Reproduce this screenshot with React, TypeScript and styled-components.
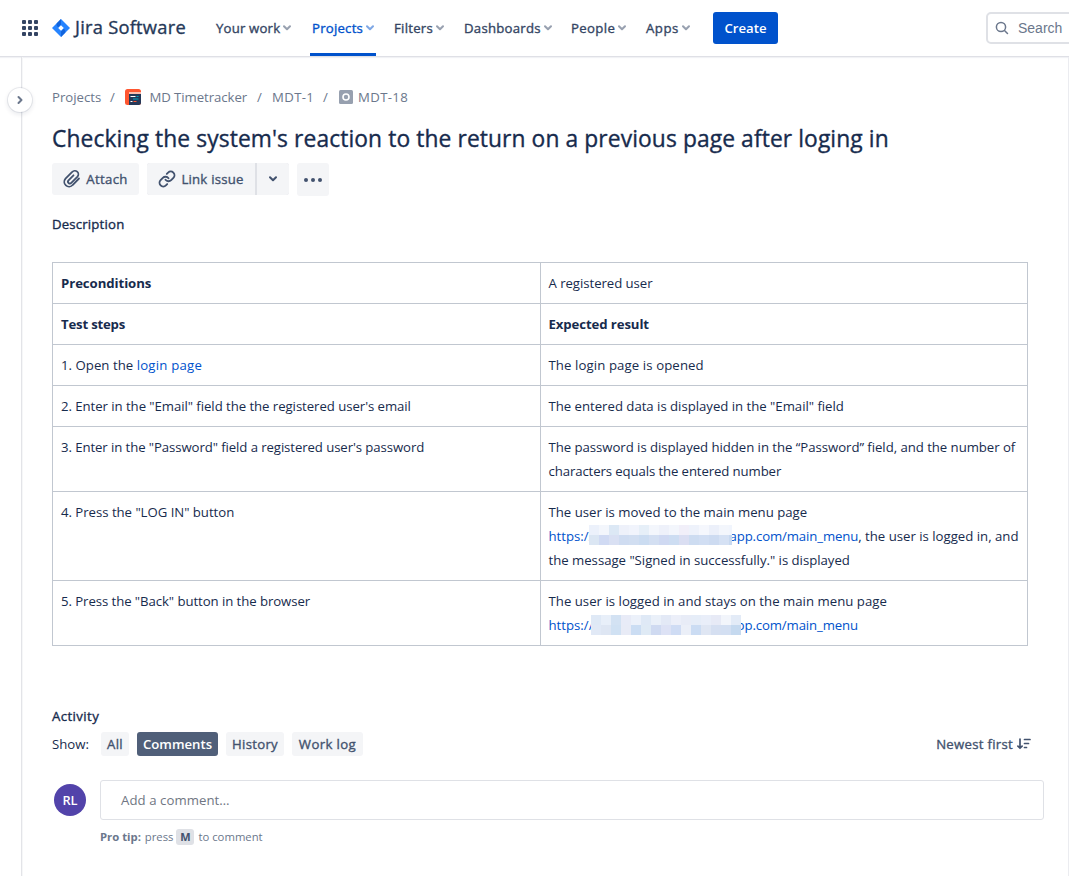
import React from "react";
import styled, { createGlobalStyle } from "styled-components";

const GlobalStyle = createGlobalStyle`
  *, *::before, *::after { box-sizing: border-box; }
  html, body { margin: 0; background: #fff; overflow: hidden; }
  body { font-family: "Open Sans", sans-serif; font-size: 13.2px; color: #172b4d; }
  button, input { font: inherit; border: 0; margin: 0; padding: 0; background: none; color: inherit; }
`;

const Page = styled.div`
  width: 1069px;
  height: 876px;
  display: flex;
  flex-direction: column;
  overflow: hidden;
`;

const Text = styled.span<{ $ls?: number; $medium?: boolean }>`
  white-space: pre;
  letter-spacing: ${(p) => p.$ls ?? 0}px;
  -webkit-text-stroke: ${(p) => (p.$medium ? "0.35px currentColor" : "0")};
`;

const Header = styled.header`
  height: 57px;
  flex: none;
  display: flex;
  align-items: flex-start;
  border-bottom: 1px solid #dfe0e6;
  box-shadow: 0 1px 1px #f1f2f5;
`;

const Switcher = styled.div`
  width: 52px;
  height: 56px;
  padding-left: 22px;
  display: flex;
  align-items: center;
`;

const Brand = styled.div`
  width: 164px;
  height: 56px;
  display: flex;
  align-items: center;
  gap: 5px;
  color: #253858;
  font-size: 18.3px;
  line-height: 24px;
  svg { flex: none; }
  span { padding-bottom: 2px; }
`;

const Nav = styled.nav`
  display: flex;
  height: 56px;
`;

const NavItem = styled.button<{ $width: number; $active?: boolean }>`
  width: ${(p) => p.$width}px;
  height: 56px;
  display: flex;
  align-items: center;
  color: ${(p) => (p.$active ? "#0052cc" : "#344563")};
`;

const NavInner = styled.span<{ $active?: boolean }>`
  height: 56px;
  display: flex;
  align-items: center;
  gap: 3px;
  margin: 0 -2px;
  padding: 3px 2px 0;
  border-bottom: 3px solid ${(p) => (p.$active ? "#0052cc" : "transparent")};
  svg { opacity: 0.5; }
`;

const CreateButton = styled.button`
  width: 65px;
  height: 32px;
  margin-top: 12px;
  border-radius: 3px;
  background: #0052cc;
  color: #fff;
  font-weight: 600;
`;

const SearchBox = styled.div`
  width: 123px;
  height: 32px;
  margin: 12px -40px 0 auto;
  flex: none;
  display: flex;
  align-items: center;
  gap: 9px;
  padding-left: 7px;
  border: 2px solid #dfe1e6;
  border-radius: 5px;
  color: #6b778c;
  font: 14px "Liberation Sans", sans-serif;
`;

const Body = styled.div`
  flex: 1;
  display: flex;
  min-height: 0;
`;

const Rail = styled.aside`
  width: 22px;
  flex: none;
  border-right: 1px solid #e3e4e8;
  box-shadow: 1px 0 0 #f6f7f8;
`;

const Expand = styled.button`
  position: relative;
  z-index: 1;
  display: flex;
  align-items: center;
  justify-content: center;
  width: 24px;
  height: 24px;
  margin: 31px 0 0 8px;
  border-radius: 50%;
  background: #fff;
  box-shadow: 0 0 0 1px rgba(9, 30, 66, 0.08), 0 2px 4px 1px rgba(9, 30, 66, 0.08);
`;

const Main = styled.main`
  flex: 1;
  padding-left: 30px;
  border-right: 1px solid #ebecf0;
  display: flex;
  flex-direction: column;
  align-items: flex-start;
`;

const Crumbs = styled.div`
  height: 20px;
  margin-top: 30px;
  display: flex;
  align-items: center;
  color: #6b778c;
  svg { flex: none; }
`;

const Crumb = styled.span<{ $width: number }>`
  display: flex;
  align-items: center;
  width: ${(p) => p.$width}px;
  gap: 5px;
`;

const Title = styled.h1`
  margin: 17px 0 0;
  height: 30px;
  line-height: 30px;
  font-size: 22.8px;
  font-weight: 400;
  white-space: nowrap;
`;

const Toolbar = styled.div`
  display: flex;
  align-items: flex-start;
  height: 33px;
  margin-top: 9px;
  gap: 8px;
  color: #42526e;
`;

const ToolButton = styled.button<{ $width: number; $radius?: string; $height?: number }>`
  width: ${(p) => p.$width}px;
  height: ${(p) => p.$height ?? 32}px;
  display: flex;
  align-items: center;
  justify-content: center;
  gap: 5px;
  border-radius: ${(p) => p.$radius ?? "3px"};
  background: #f4f5f7;
`;

const Split = styled.div`
  display: flex;
  gap: 2px;
  background: #dfe1e6;
  border-radius: 3px;
`;

const SectionTitle = styled.h2<{ $top: number }>`
  margin: ${(p) => p.$top}px 0 0;
  height: 20px;
  line-height: 20px;
  font-size: 13.2px;
  font-weight: 400;
`;

const Table = styled.table`
  width: 976px;
  margin-top: 28px;
  border-collapse: collapse;
  table-layout: fixed;
  border: 1px solid #c1c7d0;
`;

const Cell = styled.td<{ $bold?: boolean }>`
  border: 1px solid #c1c7d0;
  padding: 8px 0 8px 8px;
  line-height: 24px;
  vertical-align: top;
  white-space: nowrap;
  font-weight: ${(p) => (p.$bold ? 700 : 400)};
`;

const Line = styled.div`
  height: 24px;
  display: flex;
`;

const Link = styled.a`
  color: #0052cc;
  text-decoration: none;
  display: inline-flex;
`;

const Mosaic = styled.span<{ $width: number; $top: number; $left: number; $right: number }>`
  position: relative;
  z-index: 1;
  flex: none;
  display: inline-grid;
  grid-template-columns: repeat(15, 10px);
  grid-auto-rows: 10px;
  width: ${(p) => p.$width}px;
  height: 20px;
  margin: ${(p) => `${p.$top}px ${p.$right}px 0 ${p.$left}px`};
  overflow: hidden;
`;

const Tile = styled.span<{ $color: string }>`
  background: ${(p) => p.$color};
`;

const ShowRow = styled.div`
  width: 979px;
  height: 24px;
  margin-top: 6px;
  display: flex;
  align-items: center;
  gap: 8px;
`;

const ShowLabel = styled.span`
  width: 41px;
`;

const Tab = styled.button<{ $width: number; $active?: boolean }>`
  width: ${(p) => p.$width}px;
  height: 24px;
  border-radius: 3px;
  background: ${(p) => (p.$active ? "#505f79" : "#f4f5f7")};
  color: ${(p) => (p.$active ? "#fff" : "#42526e")};
  font-weight: ${(p) => (p.$active ? 600 : 400)};
`;

const Sort = styled.div`
  margin-left: auto;
  display: flex;
  align-items: center;
  gap: 4px;
  color: #42526e;
`;

const CommentRow = styled.div`
  display: flex;
  align-items: center;
  gap: 14px;
  margin: 24px 0 0 2px;
`;

const Avatar = styled.div`
  width: 32px;
  height: 32px;
  border-radius: 50%;
  background: #5243aa;
  color: #fff;
  font-size: 12.8px;
  font-weight: 600;
  display: flex;
  align-items: center;
  justify-content: center;
`;

const CommentBox = styled.div`
  width: 944px;
  height: 40px;
  padding-left: 20px;
  display: flex;
  align-items: center;
  border: 1px solid #dfe1e6;
  border-radius: 3px;
  color: #707683;
`;

const Tip = styled.div`
  height: 16px;
  margin: 9px 0 0 48px;
  display: flex;
  align-items: center;
  color: #6b778c;
  font-size: 11.3px;
  line-height: 14px;
  > span, > b { padding-bottom: 1px; }
`;

const Bold = styled.b`
  font-weight: 700;
  margin-right: 1px;
`;

const Key = styled.kbd`
  width: 18px;
  height: 16px;
  margin: 0 4px 0 3px;
  border-radius: 3px;
  background: #dfe1e6;
  color: #42526e;
  font: 700 11px/16px "Open Sans", sans-serif;
  text-align: center;
`;

const Chevron = ({ color = "currentColor" }: { color?: string }) => (
  <svg width="8" height="6" viewBox="0 0 8 6" fill="none" stroke={color} strokeWidth="2" strokeLinecap="round" strokeLinejoin="round">
    <path d="M1 1.2 4 4.3 7 1.2" />
  </svg>
);

const NAV = [
  { label: "Your work", width: 96, ls: 0.18 },
  { label: "Projects", width: 82, ls: 0.22, active: true },
  { label: "Filters", width: 70, ls: 0.25 },
  { label: "Dashboards", width: 107, ls: 0.25 },
  { label: "People", width: 75, ls: 0.35 },
  { label: "Apps", width: 67, ls: 0.5 },
];

const HIDDEN_A = [
  "#ecf1fb", "#f3f6fc", "#dce8f5", "#eef1fa", "#f1f4fc", "#e6eff8", "#f3f6fc", "#eef1fa", "#f3f6fc", "#f1eff9", "#eef2fb", "#f5f7fd", "#ecf0fa", "#f3f6fc", "#f1f5fd",
  "#dbe6f3", "#d0daf3", "#d9e0f3", "#cfdcf1", "#d1def1", "#cbdcf1", "#d3dff2", "#cfd9f2", "#cdddf2", "#dadef2", "#cddcf1", "#d1def3", "#cddbf1", "#d5e1f4", "#c8d9f0",
];

const HIDDEN_B = [
  "#dfe9f6", "#e8eff9", "#d3e2f3", "#e8ebf7", "#ecf1fa", "#dfe9f6", "#eaf0f9", "#e3e9f6", "#eceff9", "#e8ecf7", "#e6edf8", "#e9eef9", "#e7eaf6", "#f2f5fb", "#e3ebf7",
  "#e1e9f6", "#dee6f3", "#d0e1f3", "#e8ebf6", "#cbddf3", "#dfeaf5", "#cfdaf1", "#dde2f5", "#cfdcf4", "#ebeff8", "#cbdcf3", "#dfe6f3", "#d5dff1", "#d3dff2", "#c5d9ef",
];

export default function App() {
  return (
    <Page>
      <GlobalStyle />
      <Header>
        <Switcher>
          <svg width="16" height="16" viewBox="0 0 16 16" fill="#344563">
            {[0, 6, 12].map((y) => [0, 6, 12].map((x) => <rect key={`${x}-${y}`} x={x} y={y} width="4" height="4" rx="1" />))}
          </svg>
        </Switcher>
        <Brand>
          <svg width="18" height="18" viewBox="0 0 18 18">
            <path d="M9 0 18 9 9 18 0 9Z" fill="#2684ff" />
            <path d="M9 0 4.6 4.4Q4.2 7 6.3 8.2L9 5.6Z" fill="#1264dc" />
            <path d="M9 18 13.4 13.6Q13.8 11 11.7 9.8L9 12.4Z" fill="#1264dc" />
            <path d="M9 6.2 11.8 9 9 11.8 6.2 9Z" fill="#fff" />
          </svg>
          <Text $ls={0.25} $medium>Jira Software</Text>
        </Brand>
        <Nav>
          {NAV.map((n) => (
            <NavItem key={n.label} $width={n.width} $active={n.active}>
              <NavInner $active={n.active}>
                <Text $medium $ls={n.ls}>{n.label}</Text>
                <Chevron />
              </NavInner>
            </NavItem>
          ))}
        </Nav>
        <CreateButton><Text>Create</Text></CreateButton>
        <SearchBox>
          <svg width="14" height="14" viewBox="0 0 14 14" fill="none" stroke="#6b778c" strokeWidth="1.5" strokeLinecap="round">
            <circle cx="6" cy="6" r="4.6" />
            <path d="m9.5 9.5 3 3" />
          </svg>
          <span>Search</span>
        </SearchBox>
      </Header>
      <Body>
        <Rail>
          <Expand>
            <svg width="6" height="10" viewBox="0 0 6 10" fill="none" stroke="#6b778c" strokeWidth="2" strokeLinecap="round" strokeLinejoin="round">
              <path d="M1.5 2 4.5 5 1.5 8" />
            </svg>
          </Expand>
        </Rail>
        <Main>
          <Crumbs>
            <Crumb $width={58}><Text>Projects</Text></Crumb>
            <Crumb $width={15}>/</Crumb>
            <Crumb $width={132}>
              <svg width="16" height="16" viewBox="0 0 16 16">
                <rect width="16" height="16" rx="2.5" fill="#ff5630" />
                <path d="M4 4h12v9.500A2.500 2.500 0 0 1 13.500 16H4Z" fill="#253858" />
                <path d="M4 3h12v2H4Z" fill="#ffbdad" />
                <path d="M5.500 7.500h5M5.500 12.500h2" stroke="#fff" />
                <path d="M11.500 7.500h2M8 10h5.500" stroke="#00a3bf" />
                <path d="M8.500 12.500h3" stroke="#ff5630" />
              </svg>
              <Text $ls={-0.05}>{" MD Timetracker"}</Text>
            </Crumb>
            <Crumb $width={15}>/</Crumb>
            <Crumb $width={51}><Text $ls={0.35}>MDT-1</Text></Crumb>
            <Crumb $width={16}>/</Crumb>
            <Crumb $width={80}>
              <svg width="14" height="14" viewBox="0 0 14 14">
                <rect width="14" height="14" rx="1.5" fill="#97a0af" />
                <circle cx="7" cy="7" r="3" fill="none" stroke="#fff" strokeWidth="1.6" />
              </svg>
              <Text $ls={0.35}>MDT-18</Text>
            </Crumb>
          </Crumbs>
          <Title><Text $medium $ls={0.1}>Checking the system's reaction to the return on a previous page after loging in</Text></Title>
          <Toolbar>
            <ToolButton $width={87}>
              <svg width="18" height="20" viewBox="0 0 18 20" fill="none" stroke="currentColor" strokeWidth="1.8" strokeLinecap="round">
                <path d="M16 9.500 9.600 16A4.700 4.700 0 0 1 2.500 9.700L9.200 3A3.500 3.500 0 0 1 14.500 7.600L8.300 13.900A1.900 1.900 0 0 1 5.500 11.300L10.500 6.300" />
              </svg>
              <Text $medium $ls={0.35}>Attach</Text>
            </ToolButton>
            <Split>
              <ToolButton $width={108} $radius="3px 0 0 3px">
                <svg width="18" height="18" viewBox="0 0 24 24" fill="none" stroke="currentColor" strokeWidth="2.5" strokeLinecap="round">
                  <path d="M10 13a5 5 0 0 0 7.540.54l3-3a5 5 0 0 0-7.070-7.070l-1.720 1.710" />
                  <path d="M14 11a5 5 0 0 0-7.540-.54l-3 3a5 5 0 0 0 7.070 7.070l1.710-1.710" />
                </svg>
                <Text $medium $ls={0.22}>Link issue</Text>
              </ToolButton>
              <ToolButton $width={32} $radius="0 3px 3px 0"><Chevron /></ToolButton>
            </Split>
            <ToolButton $width={32} $height={33}>
              <svg width="18" height="4" viewBox="0 0 18 4" fill="currentColor">
                <circle cx="2" cy="2" r="2" /><circle cx="9" cy="2" r="2" /><circle cx="16" cy="2" r="2" />
              </svg>
            </ToolButton>
          </Toolbar>
          <SectionTitle $top={18}><Text $medium $ls={0.18}>Description</Text></SectionTitle>
          <Table>
            <tbody>
              <tr>
                <Cell $bold><Text $ls={-0.07}>Preconditions</Text></Cell>
                <Cell><Text $ls={-0.05}>A registered user</Text></Cell>
              </tr>
              <tr>
                <Cell $bold><Text $ls={-0.2}>Test steps</Text></Cell>
                <Cell $bold><Text $ls={-0.1}>Expected result</Text></Cell>
              </tr>
              <tr>
                <Cell><Text $ls={0.03}>1. Open the </Text><Link><Text $ls={0.22}>login page</Text></Link></Cell>
                <Cell><Text $ls={0.1}>The login page is opened</Text></Cell>
              </tr>
              <tr>
                <Cell><Text $ls={-0.055}>2. Enter in the "Email" field the the registered user's email</Text></Cell>
                <Cell><Text $ls={-0.02}>The entered data is displayed in the "Email" field</Text></Cell>
              </tr>
              <tr>
                <Cell><Text $ls={-0.09}>3. Enter in the "Password" field a registered user's password</Text></Cell>
                <Cell>
                  <Line><Text $ls={-0.045}>The password is displayed hidden in the “Password” field, and the number of</Text></Line>
                  <Line><Text $ls={-0.11}>characters equals the entered number</Text></Line>
                </Cell>
              </tr>
              <tr>
                <Cell><Text $ls={-0.03}>4. Press the "LOG IN" button</Text></Cell>
                <Cell>
                  <Line><Text>The user is moved to the main menu page</Text></Line>
                  <Line>
                    <Link>
                      <Text>https://</Text>
                      <Mosaic $width={143} $top={1} $left={-4} $right={-3}>{HIDDEN_A.map((c, i) => <Tile key={i} $color={c} />)}</Mosaic>
                      <Text $ls={-0.12}>app.com/main_menu</Text>
                    </Link>
                    <Text>, the user is logged in, and</Text>
                  </Line>
                  <Line><Text $ls={-0.02}>the message "Signed in successfully." is displayed</Text></Line>
                </Cell>
              </tr>
              <tr>
                <Cell><Text $ls={-0.07}>5. Press the "Back" button in the browser</Text></Cell>
                <Cell>
                  <Line><Text $ls={0.02}>The user is logged in and stays on the main menu page</Text></Line>
                  <Line>
                    <Link>
                      <Text>https://</Text>
                      <Mosaic $width={150} $top={2} $left={-2} $right={-5}>{HIDDEN_B.map((c, i) => <Tile key={i} $color={c} />)}</Mosaic>
                      <Text $ls={-0.12}>pp.com/main_menu</Text>
                    </Link>
                  </Line>
                </Cell>
              </tr>
            </tbody>
          </Table>
          <SectionTitle $top={60}><Text $medium $ls={0.42}>Activity</Text></SectionTitle>
          <ShowRow>
            <ShowLabel><Text>Show:</Text></ShowLabel>
            <Tab $width={28}><Text $medium $ls={0.4}>All</Text></Tab>
            <Tab $width={81} $active><Text>Comments</Text></Tab>
            <Tab $width={58}><Text $medium $ls={0.28}>History</Text></Tab>
            <Tab $width={71}><Text $medium $ls={0.38}>Work log</Text></Tab>
            <Sort>
              <Text $medium $ls={0.28}>Newest first</Text>
              <svg width="14" height="12" viewBox="0 0 14 12" fill="none" stroke="currentColor" strokeWidth="1.700" strokeLinecap="round">
                <path d="M3 1v9M.9 8.200 3 10.200l2.100-2M7.500 1.500h5.500M7.500 5.500h4M7.500 9.500h2" />
              </svg>
            </Sort>
          </ShowRow>
          <CommentRow>
            <Avatar>RL</Avatar>
            <CommentBox><Text $ls={0.06}>Add a comment…</Text></CommentBox>
          </CommentRow>
          <Tip>
            <Bold><Text>Pro tip:</Text></Bold>
            <Text> press</Text>
            <Key>M</Key>
            <Text>to comment</Text>
          </Tip>
        </Main>
      </Body>
    </Page>
  );
}
